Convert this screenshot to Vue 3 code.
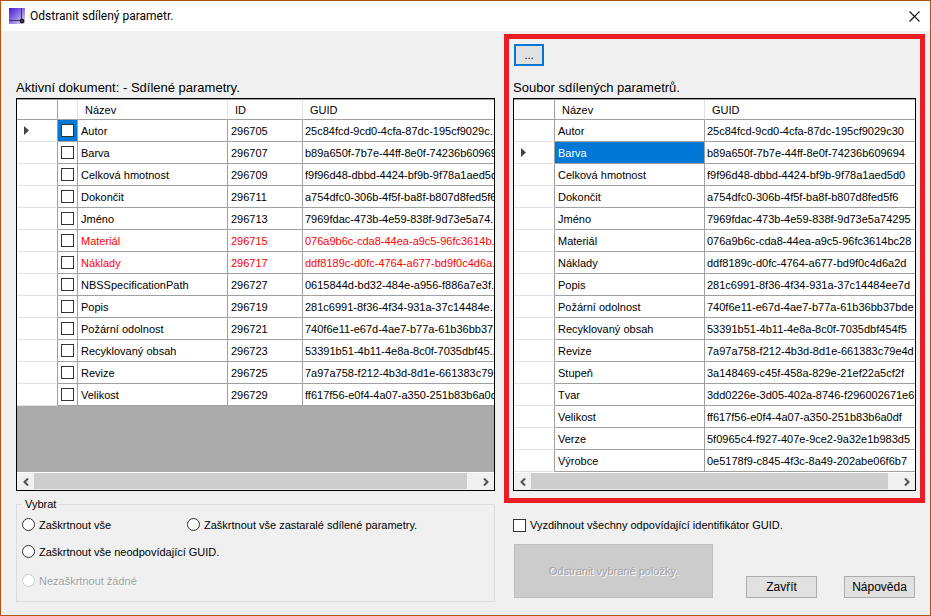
<script setup>
import { ref } from 'vue'

const activeRows = ref([
  { name: 'Autor', id: '296705', guid: '25c84fcd-9cd0-4cfa-87dc-195cf9029c...' },
  { name: 'Barva', id: '296707', guid: 'b89a650f-7b7e-44ff-8e0f-74236b609694' },
  { name: 'Celková hmotnost', id: '296709', guid: 'f9f96d48-dbbd-4424-bf9b-9f78a1aed5d0' },
  { name: 'Dokončit', id: '296711', guid: 'a754dfc0-306b-4f5f-ba8f-b807d8fed5f6' },
  { name: 'Jméno', id: '296713', guid: '7969fdac-473b-4e59-838f-9d73e5a74...' },
  { name: 'Materiál', id: '296715', guid: '076a9b6c-cda8-44ea-a9c5-96fc3614b...', stale: true },
  { name: 'Náklady', id: '296717', guid: 'ddf8189c-d0fc-4764-a677-bd9f0c4d6a...', stale: true },
  { name: 'NBSSpecificationPath', id: '296727', guid: '0615844d-bd32-484e-a956-f886a7e3f...' },
  { name: 'Popis', id: '296719', guid: '281c6991-8f36-4f34-931a-37c14484e...' },
  { name: 'Požární odolnost', id: '296721', guid: '740f6e11-e67d-4ae7-b77a-61b36bb37...' },
  { name: 'Recyklovaný obsah', id: '296723', guid: '53391b51-4b11-4e8a-8c0f-7035dbf45...' },
  { name: 'Revize', id: '296725', guid: '7a97a758-f212-4b3d-8d1e-661383c79...' },
  { name: 'Velikost', id: '296729', guid: 'ff617f56-e0f4-4a07-a350-251b83b6a0df' },
].map((row) => ({ ...row, checked: false })))

const fileRows = [
  { name: 'Autor', guid: '25c84fcd-9cd0-4cfa-87dc-195cf9029c30' },
  { name: 'Barva', guid: 'b89a650f-7b7e-44ff-8e0f-74236b609694' },
  { name: 'Celková hmotnost', guid: 'f9f96d48-dbbd-4424-bf9b-9f78a1aed5d0' },
  { name: 'Dokončit', guid: 'a754dfc0-306b-4f5f-ba8f-b807d8fed5f6' },
  { name: 'Jméno', guid: '7969fdac-473b-4e59-838f-9d73e5a74295' },
  { name: 'Materiál', guid: '076a9b6c-cda8-44ea-a9c5-96fc3614bc28' },
  { name: 'Náklady', guid: 'ddf8189c-d0fc-4764-a677-bd9f0c4d6a2d' },
  { name: 'Popis', guid: '281c6991-8f36-4f34-931a-37c14484ee7d' },
  { name: 'Požární odolnost', guid: '740f6e11-e67d-4ae7-b77a-61b36bb37bde' },
  { name: 'Recyklovaný obsah', guid: '53391b51-4b11-4e8a-8c0f-7035dbf454f5' },
  { name: 'Revize', guid: '7a97a758-f212-4b3d-8d1e-661383c79e4d' },
  { name: 'Stupeň', guid: '3a148469-c45f-458a-829e-21ef22a5cf2f' },
  { name: 'Tvar', guid: '3dd0226e-3d05-402a-8746-f296002671e6' },
  { name: 'Velikost', guid: 'ff617f56-e0f4-4a07-a350-251b83b6a0df' },
  { name: 'Verze', guid: '5f0965c4-f927-407e-9ce2-9a32e1b983d5' },
  { name: 'Výrobce', guid: '0e5178f9-c845-4f3c-8a49-202abe06f6b7' },
]

const activeIndex = ref(0)
const fileIndex = ref(1)
const selection = ref('')
const matchAll = ref(false)
</script>

<template>
  <div class="window">
    <header class="titlebar">
      <svg class="app-icon" width="17" height="17" viewBox="0 0 17 17" aria-hidden="true">
        <defs>
          <linearGradient id="tile" x1="0" y1="0" x2="1" y2="1">
            <stop offset="0" stop-color="#4a16d8" />
            <stop offset="0.5" stop-color="#8f74e2" />
            <stop offset="1" stop-color="#e6e2f6" />
          </linearGradient>
        </defs>
        <rect width="16" height="16" fill="url(#tile)" />
        <path d="M0 12.5H12M12.5 0V12" stroke="#3a3358" fill="none" />
        <rect x="11.5" y="11.5" width="3" height="3" rx="1" fill="#777" stroke="#111" stroke-width="1.5" />
      </svg>
      <h1>Odstranit sdílený parametr.</h1>
      <button class="close" type="button" aria-label="Zavřít okno">
        <svg width="11" height="11" viewBox="0 0 11 11"><path d="M.5 .5l10 10M10.5 .5l-10 10" stroke="#111" stroke-width="1.1" /></svg>
      </button>
    </header>

    <main class="content">
      <section class="left">
        <h2>Aktivní dokument: - Sdílené parametry.</h2>
        <div class="grid grow">
          <table>
            <colgroup><col class="c-head" /><col class="c-check" /><col class="c-name" /><col class="c-id" /><col /></colgroup>
            <thead>
              <tr><th class="rowhead"></th><th></th><th>Název</th><th>ID</th><th>GUID</th></tr>
            </thead>
            <tbody>
              <tr v-for="(row, i) in activeRows" :key="row.id" :class="{ stale: row.stale }" @click="activeIndex = i">
                <td class="rowhead">
                  <svg v-if="i === activeIndex" width="5" height="9" viewBox="0 0 5 9"><path d="M0 0L5 4.5L0 9Z" fill="#444" /></svg>
                </td>
                <td class="tick" :class="{ selected: i === activeIndex }">
                  <input v-model="row.checked" type="checkbox" class="box" :aria-label="row.name" />
                </td>
                <td>{{ row.name }}</td>
                <td>{{ row.id }}</td>
                <td class="guid">{{ row.guid }}</td>
              </tr>
            </tbody>
          </table>
          <div class="scrollbar">
            <button type="button" aria-label="Posunout vlevo"><svg width="6" height="8" viewBox="0 0 6 8"><path d="M5 .5L1.5 4L5 7.5" /></svg></button>
            <div class="track"><div class="thumb"></div></div>
            <button type="button" aria-label="Posunout vpravo"><svg width="6" height="8" viewBox="0 0 6 8"><path d="M1 .5L4.5 4L1 7.5" /></svg></button>
          </div>
        </div>

        <fieldset>
          <legend>Vybrat</legend>
          <div class="options">
            <label><input v-model="selection" type="radio" name="sel" value="all" />Zaškrtnout vše</label>
            <label><input v-model="selection" type="radio" name="sel" value="stale" />Zaškrtnout vše zastaralé sdílené parametry.</label>
            <label class="wide"><input v-model="selection" type="radio" name="sel" value="guid" />Zaškrtnout vše neodpovídající GUID.</label>
            <label class="wide off"><input v-model="selection" type="radio" name="sel" value="none" disabled />Nezaškrtnout žádné</label>
          </div>
        </fieldset>
      </section>

      <section class="right">
        <div class="highlight">
          <button class="browse" type="button">...</button>
          <h2>Soubor sdílených parametrů.</h2>
          <div class="grid">
            <table>
              <colgroup><col class="c-head" /><col class="c-name" /><col /></colgroup>
              <thead>
                <tr><th class="rowhead"></th><th>Název</th><th>GUID</th></tr>
              </thead>
              <tbody>
                <tr v-for="(row, i) in fileRows" :key="row.guid" @click="fileIndex = i">
                  <td class="rowhead">
                    <svg v-if="i === fileIndex" width="5" height="9" viewBox="0 0 5 9"><path d="M0 0L5 4.5L0 9Z" fill="#444" /></svg>
                  </td>
                  <td :class="{ selected: i === fileIndex }">{{ row.name }}</td>
                  <td class="guid">{{ row.guid }}</td>
                </tr>
              </tbody>
            </table>
            <div class="scrollbar">
              <button type="button" aria-label="Posunout vlevo"><svg width="6" height="8" viewBox="0 0 6 8"><path d="M5 .5L1.5 4L5 7.5" /></svg></button>
              <div class="track"><div class="thumb"></div></div>
              <button type="button" aria-label="Posunout vpravo"><svg width="6" height="8" viewBox="0 0 6 8"><path d="M1 .5L4.5 4L1 7.5" /></svg></button>
            </div>
          </div>
        </div>

        <label class="match"><input v-model="matchAll" type="checkbox" class="box" />Vyzdihnout všechny odpovídající identifikátor GUID.</label>
        <div class="actions">
          <button class="remove" type="button" disabled>Odstranit vybrané položky.</button>
          <button class="plain" type="button">Zavřít</button>
          <button class="plain" type="button">Nápověda</button>
        </div>
      </section>
    </main>
  </div>
</template>

<style>
body {
  margin: 0;
}
</style>

<style scoped>
* {
  box-sizing: border-box;
}
.window {
  display: flex;
  flex-direction: column;
  min-height: 100vh;
  border: 1px solid #b4530f;
  background: #f0f0f0;
  color: #000;
  font: 11px/14px "Liberation Sans", Arial, sans-serif;
}
button,
input {
  font: inherit;
  color: inherit;
  margin: 0;
}
.titlebar {
  display: flex;
  align-items: center;
  height: 30px;
  padding: 0 10px 0 8px;
  background: #fff;
}
h1 {
  flex: 1;
  margin: 0 0 0 4px;
  font: 12px/16px Roboto, "Open Sans", sans-serif;
}
.close {
  display: flex;
  padding: 0;
  border: 0;
  background: none;
}
.content {
  flex: 1;
  display: grid;
  grid-template-columns: minmax(0, 479fr) minmax(0, 421fr);
  gap: 9px;
  padding: 3px 5px 13px 15px;
}
.left,
.right {
  display: flex;
  flex-direction: column;
}
.left {
  padding-top: 44px;
}
h2 {
  margin: 0;
  font-size: 13px;
  font-weight: 400;
  line-height: 20px;
  white-space: nowrap;
}
.grid {
  display: flex;
  flex-direction: column;
  border: 1px solid #000;
  background: #ababab;
  overflow: hidden;
}
.grow {
  flex: 1;
}
table {
  width: 100%;
  table-layout: fixed;
  border-collapse: separate;
  border-spacing: 0;
  border-top: 1px solid #a0a0a0;
  background: #fff;
}
.c-head {
  width: 41px;
}
.c-check {
  width: 20px;
}
.c-name {
  width: 150px;
}
.c-id {
  width: 75px;
}
th,
td {
  padding: 0 0 0 3px;
  border: solid #a0a0a0;
  border-width: 0 1px 1px 0;
  text-align: left;
  font-weight: 400;
  white-space: nowrap;
  overflow: hidden;
}
th {
  height: 20px;
  padding-left: 7px;
  border-right-color: #e3e3e3;
}
td {
  height: 22px;
}
td.guid {
  padding-left: 2px;
}
th:last-child,
td:last-child {
  border-right: 0;
}
th.rowhead {
  border-right-color: #a0a0a0;
}
td.rowhead {
  padding-left: 7px;
  border-bottom-color: #e3e3e3;
}
.rowhead svg,
.tick input {
  display: block;
}
.stale {
  color: #f00;
}
.selected {
  background: #0078d7;
  color: #fff;
}
.box {
  appearance: none;
  flex: none;
  width: 13px;
  height: 13px;
  border: 1px solid #333;
  background: #fff;
}
.box:checked {
  box-shadow: inset 0 0 0 2px #fff;
  background: #333;
}
.scrollbar {
  display: flex;
  height: 18px;
  margin-top: auto;
  border-top: 1px solid #fff;
  background: #f0f0f0;
}
.scrollbar button {
  display: flex;
  align-items: center;
  justify-content: center;
  width: 17px;
  padding: 0;
  border: 0;
  background: none;
}
.scrollbar path {
  fill: none;
  stroke: #505050;
  stroke-width: 2;
}
.track {
  flex: 1;
  padding: 0 10px 1px 0;
}
.thumb {
  height: 100%;
  background: #cdcdcd;
}
fieldset {
  min-width: 0;
  height: 105px;
  margin: 6px 0 0;
  padding: 0 5px;
  border: 1px solid #dcdcdc;
}
legend {
  padding: 0 3px;
}
.options {
  display: grid;
  grid-template-columns: 165px 1fr;
  grid-template-rows: 27px 27px 31px;
  align-items: center;
}
label {
  display: flex;
  align-items: center;
  gap: 4px;
  white-space: nowrap;
}
.wide {
  grid-column: 1 / -1;
}
input[type='radio'] {
  appearance: none;
  width: 13px;
  height: 13px;
  border: 1px solid #333;
  border-radius: 50%;
  background: #fff;
}
input[type='radio']:checked {
  box-shadow: inset 0 0 0 3px #fff;
  background: #333;
}
.off {
  color: #a0a0a0;
  text-shadow: 1px 1px 0 #fff;
}
.off input[type='radio'] {
  border-color: #ccc;
}
.highlight {
  display: flex;
  flex-direction: column;
  padding: 5px 4px 7px;
  border: 5px solid #ed1c24;
}
.highlight h2 {
  margin-top: 12px;
}
.browse {
  width: 30px;
  height: 22px;
  margin-left: 1px;
  padding: 0;
  border: 2px solid #0078d7;
  background: #e1e1e1;
}
.match {
  margin: 15px 0 0 9px;
}
.actions {
  display: flex;
  align-items: flex-end;
  margin: 12px 10px 0;
}
.actions button {
  padding: 0;
  border: 1px solid #adadad;
  background: #e1e1e1;
}
.actions .plain {
  width: 71px;
  height: 22px;
  font-size: 12px;
}
.actions .plain + .plain {
  margin-left: 27px;
}
.actions .remove {
  width: 199px;
  height: 54px;
  margin-right: auto;
  border-color: #bfbfbf;
  background: #ccc;
  color: #a0a0a0;
  text-shadow: 1px 1px 0 #fff;
}
</style>
